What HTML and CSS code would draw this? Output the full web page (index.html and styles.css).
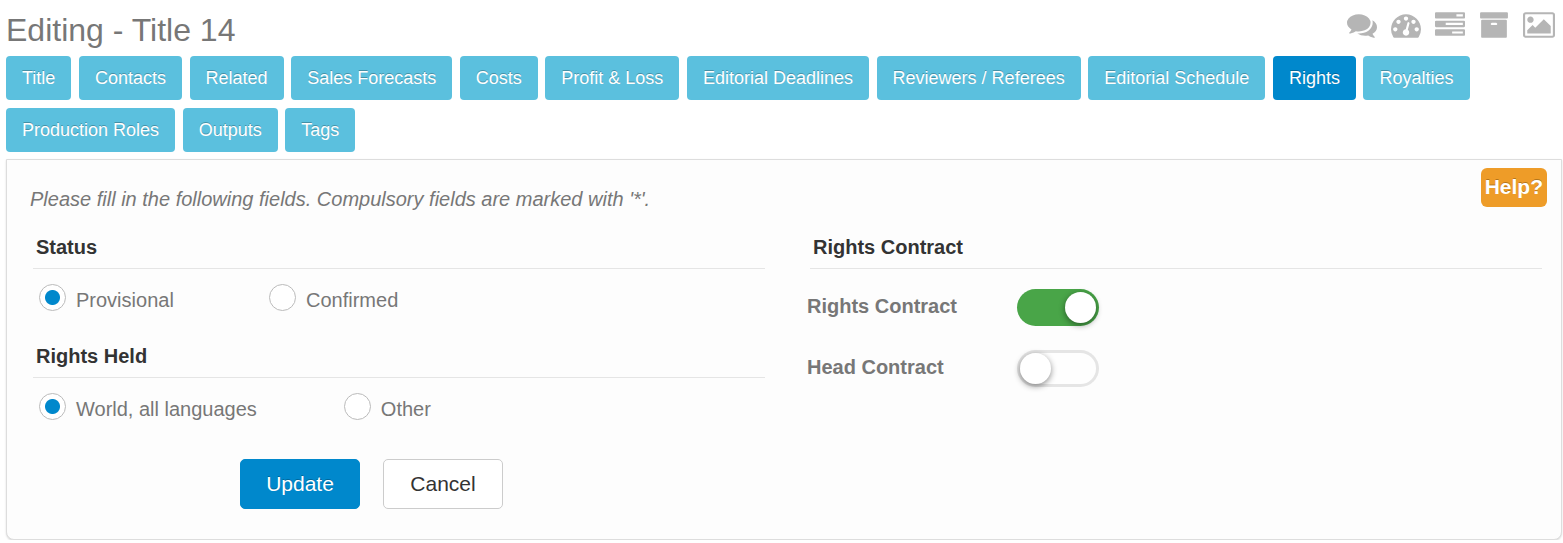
FILE: index.html
```html
<!DOCTYPE html>
<html lang="en">
    <head>
        <meta charset="utf-8">
        <title>Editing - Title 14</title>

        <link rel="stylesheet" href="styles.css">
    </head>
    <body>
        <header class="page-header">
            <h1>Editing - Title 14</h1>
            <nav class="tools">
                <a href="#" aria-label="Comments"><svg viewBox="0 0 1792 1792"><path d="M1408 768q0 139-94 257t-256.5 186.5-353.5 68.5q-86 0-176-16-124 88-278 128-36 9-86 16h-3q-11 0-20.5-8t-11.5-21q-1-3-1-6.5t.5-6.5 2-6l2.5-5 3.5-5.5 4-5 4.5-5 4-4.5q5-6 23-25t26-29.5 22.5-29 25-38.5 20.5-44q-124-72-195-177t-71-224q0-139 94-257t256.5-186.5 353.5-68.5 353.5 68.5 256.5 186.5 94 257zm384 256q0 120-71 224.5t-195 176.5q10 24 20.5 44t25 38.5 22.5 29 26 29.5 23 25q1 1 4 4.5t4.5 5 4 5 3.5 5.5l2.5 5 2 6 .5 6.5-1 6.5q-3 14-13 22t-22 7q-50-7-86-16-154-40-278-128-90 16-176 16-271 0-472-132 58 4 88 4 161 0 309-45t264-129q125-92 192-212t67-254q0-77-23-152 129 71 204 178t75 230z"/></svg></a>
                <a href="#" aria-label="Dashboard"><svg viewBox="0 0 1792 1792"><path d="M384 1152q0-53-37.5-90.5t-90.5-37.5-90.5 37.5-37.5 90.5 37.5 90.5 90.5 37.5 90.5-37.5 37.5-90.5zm192-448q0-53-37.5-90.5t-90.5-37.5-90.5 37.5-37.5 90.5 37.5 90.5 90.5 37.5 90.5-37.5 37.5-90.5zm428 481l101-382q6-26-7.5-48.5t-38.5-29.5-48 6.5-30 39.5l-101 382q-60 5-107 43.5t-63 98.5q-20 77 20 146t117 89 146-20 89-117q16-60-6-117t-72-91zm660-33q0-53-37.5-90.5t-90.5-37.5-90.5 37.5-37.5 90.5 37.5 90.5 90.5 37.5 90.5-37.5 37.5-90.5zm-640-640q0-53-37.5-90.5t-90.5-37.5-90.5 37.5-37.5 90.5 37.5 90.5 90.5 37.5 90.5-37.5 37.5-90.5zm448 192q0-53-37.5-90.5t-90.5-37.5-90.5 37.5-37.5 90.5 37.5 90.5 90.5 37.5 90.5-37.5 37.5-90.5zm320 448q0 261-141 483-19 29-54 29h-1402q-35 0-54-29-141-221-141-483 0-182 71-348t191-286 286-191 348-71 348 71 286 191 191 286 71 348z"/></svg></a>
                <a href="#" aria-label="Tasks"><svg viewBox="0 0 1792 1792"><path d="M1024 1408h640v-128h-640v128zm-384-512h1024v-128h-1024v128zm640-512h384v-128h-384v128zm512 832v256q0 26-19 45t-45 19h-1664q-26 0-45-19t-19-45v-256q0-26 19-45t45-19h1664q26 0 45 19t19 45zm0-512v256q0 26-19 45t-45 19h-1664q-26 0-45-19t-19-45v-256q0-26 19-45t45-19h1664q26 0 45 19t19 45zm0-512v256q0 26-19 45t-45 19h-1664q-26 0-45-19t-19-45v-256q0-26 19-45t45-19h1664q26 0 45 19t19 45z"/></svg></a>
                <a href="#" aria-label="Archive"><svg viewBox="0 0 1792 1792"><path d="M1088 832q0-26-19-45t-45-19h-256q-26 0-45 19t-19 45 19 45 45 19h256q26 0 45-19t19-45zm576-192v960q0 26-19 45t-45 19h-1408q-26 0-45-19t-19-45v-960q0-26 19-45t45-19h1408q26 0 45 19t19 45zm64-448v256q0 26-19 45t-45 19h-1536q-26 0-45-19t-19-45v-256q0-26 19-45t45-19h1536q26 0 45 19t19 45z"/></svg></a>
                <a href="#" aria-label="Images"><svg class="wide" viewBox="-64 0 1920 1792"><path d="M576 576q0 80-56 136t-136 56-136-56-56-136 56-136 136-56 136 56 56 136zm1024 384v448h-1408v-192l320-320 160 160 512-512zm96-704h-1600q-13 0-22.5 9.5t-9.5 22.5v1216q0 13 9.5 22.5t22.5 9.5h1600q13 0 22.5-9.5t9.5-22.5v-1216q0-13-9.5-22.5t-22.5-9.5zm160 32v1216q0 66-47 113t-113 47h-1600q-66 0-113-47t-47-113v-1216q0-66 47-113t113-47h1600q66 0 113 47t47 113z"/></svg></a>
            </nav>
        </header>

        <nav class="tabs">
            <a href="#">Title</a>
            <a href="#">Contacts</a>
            <a href="#">Related</a>
            <a href="#">Sales Forecasts</a>
            <a href="#">Costs</a>
            <a href="#">Profit &amp; Loss</a>
            <a href="#">Editorial Deadlines</a>
            <a href="#">Reviewers / Referees</a>
            <a href="#">Editorial Schedule</a>
            <a href="#" class="active">Rights</a>
            <a href="#">Royalties</a>
            <a href="#">Production Roles</a>
            <a href="#">Outputs</a>
            <a href="#">Tags</a>
        </nav>

        <form class="panel">
            <div class="intro">
                <p>Please fill in the following fields. Compulsory fields are marked with '*'.</p>
                <button type="button" class="help">Help?</button>
            </div>

            <div class="columns">
                <div class="column">
                    <h2 id="status">Status</h2>
                    <div class="radios" role="radiogroup" aria-labelledby="status">
                        <label><input type="radio" name="status" checked> Provisional</label>
                        <label><input type="radio" name="status"> Confirmed</label>
                    </div>

                    <h2 id="held">Rights Held</h2>
                    <div class="radios" role="radiogroup" aria-labelledby="held">
                        <label><input type="radio" name="held" checked> World, all languages</label>
                        <label><input type="radio" name="held"> Other</label>
                    </div>

                    <div class="buttons">
                        <button type="submit" class="btn primary">Update</button>
                        <button type="button" class="btn">Cancel</button>
                    </div>
                </div>

                <div class="column">
                    <h2>Rights Contract</h2>
                    <div class="switches">
                        <label for="rights-contract">Rights Contract</label>
                        <input type="checkbox" class="switch" id="rights-contract" checked>
                        <label for="head-contract">Head Contract</label>
                        <input type="checkbox" class="switch" id="head-contract">
                    </div>
                </div>
            </div>
        </form>
    </body>
</html>
```

FILE: styles.css
```css
* {
    box-sizing: border-box;
}

body {
    margin: 0;
    padding: 0 1px 0 6px;
    background-color: #fff;
    color: #777;
    font-family: "Liberation Sans", Arial, sans-serif;
    font-size: 20px;
    line-height: 24px;
}

.page-header {
    display: flex;
    justify-content: space-between;
    align-items: flex-start;
    height: 56px;
    padding: 10px 7px 0 0;
}

h1 {
    margin: 0;
    font-size: 32px;
    line-height: 40px;
    font-weight: normal;
}

.tools {
    display: flex;
    gap: 14px;
}

.tools svg {
    display: block;
    width: 30px;
    height: 30px;
    fill: #b5b5b5;
}

.tools .wide {
    width: 32px;
}

/* tabs */
.tabs {
    margin-bottom: -1px;
}

.tabs a {
    display: inline-block;
    margin: 0 2px 8px 0;
    padding: 10px 16px;
    border-radius: 4px;
    background-color: #5bc0de;
    color: #fff;
    font-size: 18px;
    line-height: 24px;
    vertical-align: top;
    text-decoration: none;
    text-shadow: 0 -1px 0 rgba(0, 0, 0, 0.25);
}

.tabs a.active {
    background-color: #0088cc;
}

/* form */
.panel {
    padding: 8px 14px 30px 23px;
    border: 1px solid #ddd;
    border-radius: 0 0 8px 8px;
    background-color: #fdfdfd;
    box-shadow: 0 1px 2px rgba(0, 0, 0, 0.15);
}

.intro {
    display: flex;
    justify-content: space-between;
    align-items: flex-start;
}

.intro p {
    margin: 19px 0 0;
    font-style: italic;
}

.help {
    padding: 0 4px 2px;
    border: 0;
    border-radius: 6px;
    background-color: #ee9c28;
    color: #fff;
    font: bold 21px/37px "Liberation Sans", Arial, sans-serif;
    text-shadow: 0 -1px 0 rgba(0, 0, 0, 0.25);
}

.columns {
    display: grid;
    grid-template-columns: 1fr 1fr;
    gap: 45px;
    margin: 19px 5px 0 3px;
}

h2 {
    margin: 0;
    padding: 5px 3px 9px;
    border-bottom: 1px solid #e5e5e5;
    color: #333;
    font-size: 20px;
    line-height: 24px;
}

.radios {
    display: flex;
    margin-bottom: 27px;
    padding: 15px 6px 0;
}

.radios label {
    display: flex;
    gap: 10px;
    height: 28px;
    line-height: 32px;
}

.radios label:first-child {
    min-width: 230px;
    padding-right: 87px;
}

.radios input {
    appearance: none;
    width: 27px;
    height: 27px;
    margin: 0;
    border: 1px solid #bbb;
    border-radius: 50%;
    background-color: #fff;
}

.radios input:checked {
    background-image: radial-gradient(circle, #0088cc 7px, #fff 8px);
}

.buttons {
    display: flex;
    gap: 23px;
    padding: 11px 0 0 207px;
}

.btn {
    width: 120px;
    height: 50px;
    border: 1px solid #ccc;
    border-radius: 5px;
    background-color: #fff;
    color: #333;
    font: 21px "Liberation Sans", Arial, sans-serif;
}

.btn.primary {
    border-color: #0088cc;
    background-color: #0088cc;
    color: #fff;
    text-shadow: 0 -1px 0 rgba(0, 0, 0, 0.25);
}

.switches {
    display: grid;
    grid-template-columns: 210px 82px;
    row-gap: 24px;
    margin: 20px 0 0 -3px;
}

.switches label {
    font-weight: bold;
    line-height: 34px;
}

.switch {
    appearance: none;
    display: flex;
    width: 82px;
    height: 37px;
    margin: 0;
    padding: 3px;
    border-radius: 19px;
    background-color: #fefefe;
    box-shadow: inset 0 0 0 3px #e5e5e5;
}

.switch::before {
    content: "";
    width: 31px;
    height: 31px;
    border-radius: 50%;
    background-color: #fff;
    box-shadow: 0 2px 6px rgba(0, 0, 0, 0.45);
}

.switch:checked {
    justify-content: flex-end;
    background-color: #49a548;
    box-shadow: none;
}
```
